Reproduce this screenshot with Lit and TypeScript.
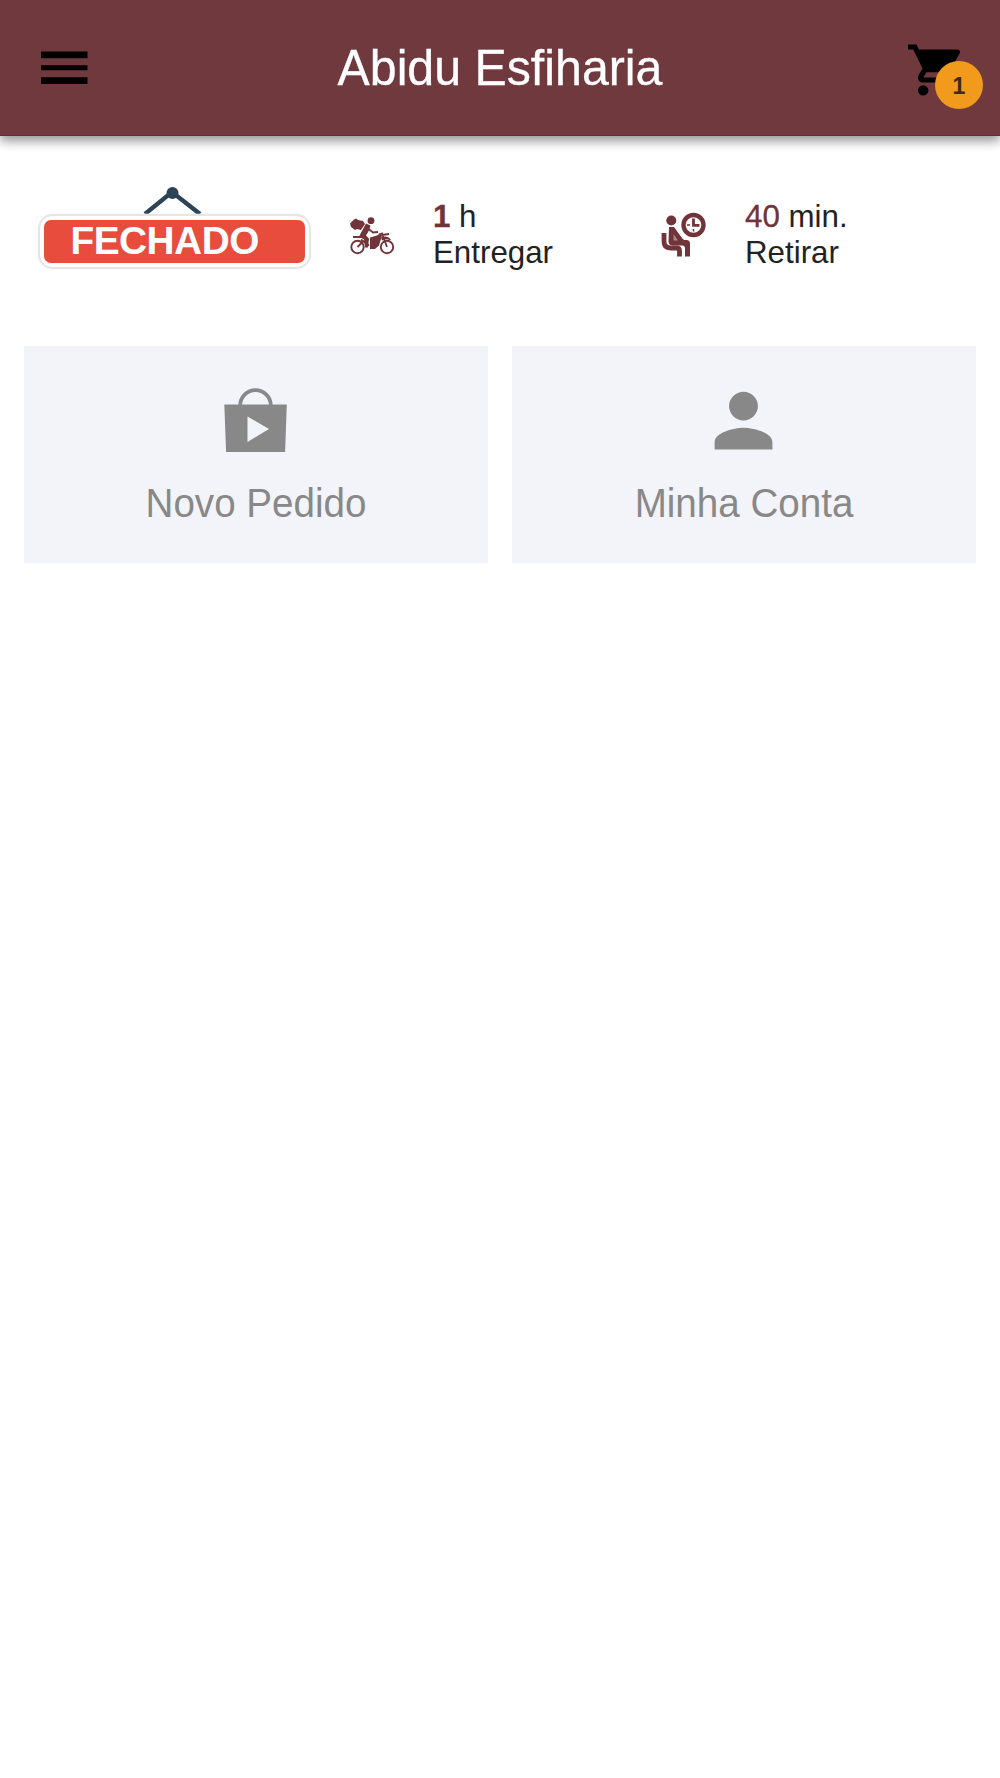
import { LitElement, html, css } from "lit";
import { customElement } from "lit/decorators.js";

@customElement("app-root")
export class AppRoot extends LitElement {
  static styles = css`
    :host {
      display: block;
      min-height: 1778px;
      background: #fff;
      font-family: "Liberation Sans", Arial, sans-serif;
      color: #222;
    }
    svg { display: block; flex: none; }
    .bar {
      box-sizing: border-box;
      height: 135.5px;
      padding: 0 34px 0 41px;
      display: grid;
      grid-template-columns: 64px 1fr 71px;
      align-items: center;
      background: #70393e;
      border-bottom: 1px solid #692a30;
      box-shadow: 0 5px 10px rgba(0, 0, 0, 0.34), 0 3px 14px rgba(0, 0, 0, 0.12);
    }
    .burger { margin-top: 2px; }
    .title {
      margin: 0;
      font-size: 48.3px;
      font-weight: 400;
      line-height: 56px;
      text-align: center;
      color: #fff;
      white-space: nowrap;
      transform: scaleY(1.035);
      -webkit-text-stroke: 0.3px #fff;
    }
    .cart { position: relative; justify-self: end; width: 64px; height: 64px; margin-top: 5px; }
    .badge {
      position: absolute;
      left: 33px;
      top: 23px;
      width: 48px;
      height: 48px;
      border-radius: 50%;
      background: #f29a1c;
      color: #3c2a12;
      font-size: 23px;
      font-weight: 700;
      line-height: 51px;
      text-align: center;
    }
    .status {
      display: grid;
      grid-template-columns: 313px 312px 1fr;
      height: 210px;
      padding-left: 36px;
      box-sizing: border-box;
      padding-top: 48px;
    }
    .sign { display: flex; flex-direction: column; width: 276px; }
    .hook { margin: 1px 0 0 107px; }
    .plate {
      box-sizing: border-box;
      height: 55px;
      width: 273px;
      margin-left: 1.5px;
      border: 2px solid #e6e6e6;
      border-radius: 15px;
      padding: 4px;
      background: #fff;
      box-shadow: 0 0 2px #eee;
    }
    .red {
      height: 43px;
      border-radius: 7px;
      background: #e84c3d;
      color: #fff;
      font-size: 38.8px;
      font-weight: 700;
      letter-spacing: -0.5px;
      line-height: 41px;
      padding-left: 27px;
    }
    .info { display: flex; align-items: flex-start; padding-top: 15.5px; }
    .pic { margin: 14px 36px 0 0; }
    .seat { margin-top: 12px; }
    .lines { font-size: 31.3px; line-height: 36.4px; white-space: nowrap; }
    .accent { color: #70343a; -webkit-text-stroke: 0.3px #70343a; }
    .bold { font-weight: 700; }
    .tiles {
      display: grid;
      grid-template-columns: 1fr 1fr;
      gap: 24px;
      padding: 0 24px;
    }
    .tile {
      box-sizing: border-box;
      height: 217px;
      padding-top: 36.5px;
      display: flex;
      flex-direction: column;
      align-items: center;
      gap: 23px;
      background: #f3f4f9;
      color: #888;
      font-size: 38.6px;
      line-height: 44px;
    }
    .glyph { margin-right: 1px; }
    .label { transform: scaleY(1.03); }
  `;

  render() {
    return html`
      <header class="bar">
        <svg class="burger" width="47" height="34" viewBox="0 0 47 34">
          <path d="M0 .5h46.500v6.700H0zM0 14.300h46.500v5H0zM0 26.300h46.500v6.700H0z" />
        </svg>
        <h1 class="title">Abidu Esfiharia</h1>
        <div class="cart">
          <svg width="64" height="64" viewBox="0 0 512 512">
            <circle cx="169.6" cy="419.2" r="41.6" />
            <circle cx="374.4" cy="419.2" r="41.6" />
            <path d="M48 51.2v41.6h41.6l74.883 151.682-31.308 50.954c-3.118 5.2-5.2 12.482-5.2 19.765 0 27.85 19.025 41.6 44.825 41.6H416v-40H177.893c-3.118 0-5.2-2.082-5.2-5.2 0-1.036 2.207-5.2 2.207-5.2l20.782-32.8h154.954c15.601 0 29.128-8.317 36.4-21.836l74.882-128.8c1.237-2.461 2.082-6.246 2.082-10.401 0-11.446-9.364-19.765-20.8-19.765H135.364L115.6 51.2H48z" />
          </svg>
          <span class="badge">1</span>
        </div>
      </header>

      <section class="status">
        <div class="sign">
          <svg class="hook" width="60" height="29" viewBox="0 0 60 29">
            <path d="M2 29L29 7L57 29" fill="none" stroke="#2d4358" stroke-width="4.400" />
            <circle cx="29.500" cy="8" r="6" fill="#2d4358" />
          </svg>
          <div class="plate"><div class="red">FECHADO</div></div>
        </div>

        <div class="info">
          <svg class="pic" width="48" height="44" viewBox="349 211.500 48 44" fill="#70343a">
            <g fill="none" stroke="#70343a">
              <circle cx="357.500" cy="245.500" r="6.200" stroke-width="1.900" />
              <circle cx="387" cy="245.500" r="6.200" stroke-width="1.900" />
              <path d="M353 235.500h11M357.500 245.500l6-6M368 227l5 4 5-.5M379 233l3-1 5 13.500M382 233.500l7-1M361 238l8 6" stroke-width="1.800" />
            </g>
            <path d="M350 222l4-4 2-1 2 1.500 5 1 2 3-4 6-4-1-2 1-4-3z" />
            <circle cx="371" cy="219.200" r="3.400" />
            <path d="M366 222l4.500 2-1.500 5-3 5 3 3-1 9h-3l-1-8-5-3z" />
            <path d="M370 236l7-2 3-2 2 2-3 10-4 3.500h-5z" />
            <path d="M381 236q6-3 10 2l-1 .8q-4-2-8 .2z" />
          </svg>
          <div class="lines">
            <div><span class="accent bold">1</span> h</div>
            <div>Entregar</div>
          </div>
        </div>

        <div class="info">
          <svg class="pic seat" width="48" height="48" viewBox="661 210 48 48" fill="#70343a">
            <circle cx="671.300" cy="219.500" r="5" />
            <path d="M669 226h5l8 11 2 2h2.500q3.500 0 3.500 3.500v13h-5v-8q0-3-3-3h-9q-4.500 0-4.500-4z" />
            <path d="M664 232v8.500q0 6.500 6.500 6.500h6q3 0 3 3v5.500" fill="none" stroke="#70343a" stroke-width="4.800" />
            <path d="M673.500 233l4.500 6.500h-4.500z" fill="#fff" opacity=".4" />
            <circle cx="693.500" cy="224" r="10" fill="none" stroke="#70343a" stroke-width="4.400" />
            <path d="M693.500 217.500v6.800h6" fill="none" stroke="#70343a" stroke-width="2.800" />
            <path d="M687 224h3M693.500 228v2.500" stroke="#70343a" stroke-width="1.500" />
          </svg>
          <div class="lines">
            <div><span class="accent">40</span> min.</div>
            <div>Retirar</div>
          </div>
        </div>
      </section>

      <nav class="tiles">
        <div class="tile">
          <svg class="glyph" width="77" height="77" viewBox="0 0 77 77">
            <path d="M23.200 23.500a15.300 15.300 0 0 1 30.600 0" fill="none" stroke="#888" stroke-width="3.700" />
            <path fill="#888" fill-rule="evenodd" d="M7.300 22.500h62.500l-1.700 47.500h-59zM30.500 34.500v25.500l21.500-13z" />
          </svg>
          <span class="label">Novo Pedido</span>
        </div>
        <div class="tile">
          <svg class="glyph" width="77" height="77" viewBox="0 0 512 512" fill="#888">
            <path d="M256 256c52.805 0 96-43.201 96-96s-43.195-96-96-96-96 43.201-96 96 43.195 96 96 96zm0 48c-63.598 0-192 32.402-192 96v48h384v-48c0-63.598-128.402-96-192-96z" />
          </svg>
          <span class="label">Minha Conta</span>
        </div>
      </nav>
    `;
  }
}
